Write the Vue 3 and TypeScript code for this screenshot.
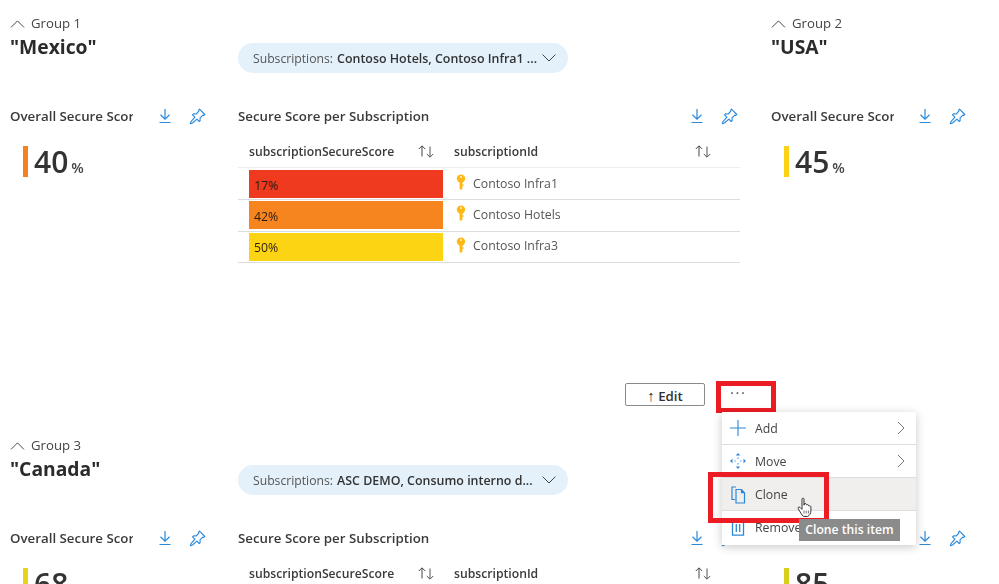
<script setup lang="ts">
interface Sub { pct: string; name: string; color: string }
interface Section {
  group: string; title: string; score: number; barColor: string;
  pillLabel: string; right: { group: string; title: string; score: number; barColor: string };
  subs: Sub[];
}
const sections: Section[] = [
  {
    group: 'Group 1', title: '"Mexico"', score: 40, barColor: '#f5821f',
    pillLabel: 'Contoso Hotels, Contoso Infra1 ...',
    right: { group: 'Group 2', title: '"USA"', score: 45, barColor: '#fcd116' },
    subs: [
      { pct: '17%', name: 'Contoso Infra1', color: '#ef3a20' },
      { pct: '42%', name: 'Contoso Hotels', color: '#f6851f' },
      { pct: '50%', name: 'Contoso Infra3', color: '#fdd413' },
    ],
  },
  {
    group: 'Group 3', title: '"Canada"', score: 68, barColor: '#e6d31c',
    pillLabel: 'ASC DEMO, Consumo interno d...',
    right: { group: '', title: '', score: 85, barColor: '#d6d01c' },
    subs: [],
  },
];
</script>

<template>
  <div class="page">
    <svg width="0" height="0" class="defs">
      <symbol id="dl" viewBox="0 0 14 16"><path d="M7 1v10M2.500 6.800 7 11.200l4.500-4.400M1.500 14.500h11" fill="none" stroke="#2b88d8" stroke-width="1.200" /></symbol>
      <symbol id="pin" viewBox="0 0 17 17"><path d="M10.500 1.200 15.800 6.500l-1 .9-1-.3-2.800 2.800.2 2.600-1 1-2.300-2.400L3.500 15 1.300 15.800l.7-2.200 3.900-4.400-2.400-2.400 1-1 2.600.2 2.800-2.800-.2-1z" fill="none" stroke="#2b88d8" stroke-width="1.100" stroke-linejoin="round" /></symbol>
      <symbol id="sort" viewBox="0 0 18 14"><path d="M5 12.500V2M1.800 5 5 1.800 8.200 5" fill="none" stroke="#444" stroke-width="1" /><path d="M13 2.500V13M9.800 10 13 13.200 16.200 10" fill="none" stroke="#555" stroke-width="1" /></symbol>
      <symbol id="key" viewBox="0 0 10 16"><circle cx="5" cy="4.600" r="4.200" fill="#fdb813" /><rect x="3.600" y="7" width="2.800" height="8.400" rx=".6" fill="#fdb813" /><rect x="6" y="10.400" width="1.600" height="1.400" fill="#fdb813" /><circle cx="5" cy="2.900" r="1" fill="#fff6d8" /></symbol>
      <symbol id="caret-up" viewBox="0 0 16 9"><path d="M.7 8.300 8 1l7.300 7.300" fill="none" stroke="#444" stroke-width="1.100" /></symbol>
      <symbol id="chev" viewBox="0 0 8 14"><path d="M1 1l6 6-6 6" fill="none" stroke="#777" stroke-width="1" /></symbol>
    </svg>

    <section v-for="(s, i) in sections" :key="s.group" class="row">
      <div class="col">
        <div class="head">
          <div class="group"><svg class="caret"><use href="#caret-up" /></svg>{{ s.group }}</div>
          <div class="title">{{ s.title }}</div>
        </div>
        <div class="widget-head narrow">
          <span class="widget-title clip">Overall Secure Score</span>
          <svg class="ic-dl"><use href="#dl" /></svg>
          <svg class="ic-pin"><use href="#pin" /></svg>
        </div>
        <div class="score">
          <span class="bar" :style="{ background: s.barColor }"></span>
          <span class="num">{{ s.score }}</span><span class="unit">%</span>
        </div>
      </div>

      <div class="col">
        <div class="head">
          <div class="pill">
            <span class="pill-label">Subscriptions:</span>
            <b class="pill-value">{{ s.pillLabel }}</b>
            <svg class="pill-chev" viewBox="0 0 14 8"><path d="M.6.6 7 7l6.400-6.400" fill="none" stroke="#444" stroke-width="1" /></svg>
          </div>
        </div>
        <div class="widget-head wide">
          <span class="widget-title">Secure Score per Subscription</span>
          <svg class="ic-dl"><use href="#dl" /></svg>
          <svg class="ic-pin"><use href="#pin" /></svg>
        </div>
        <div class="table">
          <div class="thead">
            <span class="th th-score">subscriptionSecureScore<svg class="sort"><use href="#sort" /></svg></span>
            <span class="th th-id">subscriptionId<svg class="sort"><use href="#sort" /></svg></span>
          </div>
          <div v-for="r in s.subs" :key="r.name" class="tr">
            <span class="cell-score" :style="{ background: r.color }">{{ r.pct }}</span>
            <svg class="key"><use href="#key" /></svg>
            <span class="cell-name">{{ r.name }}</span>
          </div>
        </div>
      </div>

      <div class="col">
        <div class="head">
          <template v-if="s.right.group">
            <div class="group"><svg class="caret"><use href="#caret-up" /></svg>{{ s.right.group }}</div>
            <div class="title">{{ s.right.title }}</div>
          </template>
        </div>
        <div class="widget-head narrow last-col">
          <span class="widget-title clip">Overall Secure Score</span>
          <svg class="ic-dl"><use href="#dl" /></svg>
          <svg class="ic-pin"><use href="#pin" /></svg>
        </div>
        <div class="score">
          <span class="bar" :style="{ background: s.right.barColor }"></span>
          <span class="num">{{ s.right.score }}</span><span class="unit">%</span>
        </div>
      </div>

      <div v-if="i === 0" class="toolbar">
        <button class="edit"><span class="arrow">↑</span> Edit</button>
        <div class="more">
          <span class="dots">···</span>
          <div class="menu">
            <div class="item">
              <svg class="mi" viewBox="0 0 16 16"><path d="M8 0v16M0 8h16" stroke="#2b88d8" stroke-width="1.100" /></svg>
              <span>Add</span><svg class="chev"><use href="#chev" /></svg>
            </div>
            <div class="item">
              <svg class="mi" viewBox="0 0 16 16"><path d="M8 0 5.800 2.500h4.400zM8 16l-2.200-2.500h4.400zM0 8l2.500-2.200v4.400zM16 8l-2.500-2.200v4.400z" fill="#2b88d8" /><path d="M8 4.500v1.200M8 10.300v1.200M4.500 8h1.200M10.300 8h1.200" stroke="#2b88d8" stroke-width="1.200" /></svg>
              <span>Move</span><svg class="chev"><use href="#chev" /></svg>
            </div>
            <div class="item hover">
              <svg class="mi" viewBox="0 0 16 18"><path d="M6 1H2v12.500h3M6 3.500h5.500l3 3.200V17H6zM11.500 3.500v3.200h3" fill="none" stroke="#2b88d8" stroke-width="1.200" /></svg>
              <span>Clone</span>
            </div>
            <div class="item last">
              <svg class="mi" viewBox="0 0 16 16"><path d="M2.500 .8h11v14.400h-11zM6.300 4v8M9.700 4v8" fill="none" stroke="#2b88d8" stroke-width="1.300" /></svg>
              <span>Remove</span>
            </div>
            <div class="clone-mark"></div>
            <svg class="hand" viewBox="0 0 16 21">
              <path d="M5 2.200c0-1.400 2-1.400 2 0v6l.4-1.600c1.600-.6 1.900.3 1.900 1l.3.2c1.400-.6 2 .2 2 1l.3.1c1.300-.4 2 .3 2 1.300v3.600c0 2.600-1.400 4.700-3.200 5.600H6.400C4.800 18 3 14.800 1.300 11.800.6 10.400 2 9.400 3 10.400l2 2z" fill="#fff" stroke="#333" stroke-width="1" />
              <path d="M7 13.500v3M9.200 13.500v3M11.400 13.500v3" stroke="#555" stroke-width=".8" />
            </svg>
            <div class="tooltip">Clone this item</div>
          </div>
        </div>
      </div>
    </section>
  </div>
</template>

<style>
html, body { margin: 0; background: #fff; overflow: hidden; }
</style>

<style scoped>
.page {
  width: 999px;
  height: 584px;
  overflow: hidden;
  font-family: "Open Sans", "Noto Sans", sans-serif;
  color: #333;
  filter: blur(0.5px);
}
.defs { position: absolute; }
.row {
  display: grid;
  grid-template-columns: 228px 533px 228px;
  grid-template-rows: 422px;
  height: 422px;
  padding-left: 10px;
  position: relative;
}
.col { min-width: 0; }
.head { height: 105px; padding-top: 15px; box-sizing: border-box; }
.group {
  display: flex;
  align-items: center;
  font-size: 13.200px;
  line-height: 17px;
  color: #444;
}
.caret { width: 15px; height: 8px; margin-right: 6px; }
.title {
  font-size: 19.300px;
  font-weight: 700;
  line-height: 24px;
  margin-top: 3px;
  color: #2b2b2b;
}
.pill {
  width: 330px;
  height: 30px;
  margin-top: 28px;
  border-radius: 15px;
  background: #e4f1fb;
  display: flex;
  align-items: center;
  padding-left: 15px;
  box-sizing: border-box;
  font-size: 12.200px;
  white-space: nowrap;
}
.pill-label { color: #555; margin-right: 4px; }
.pill-value { font-weight: 600; font-size: 12.450px; color: #333; }
.pill-chev { width: 14px; height: 8px; margin-left: auto; margin-right: 12px; }
.widget-head {
  height: 22px;
  display: flex;
  align-items: center;
  position: relative;
}
.narrow { width: 196px; }
.last-col { width: 195px; }
.wide { width: 500px; }
.widget-title {
  font-size: 13.300px;
  font-weight: 600;
  color: #3a3a3a;
  white-space: nowrap;
}
.clip { width: 123px; overflow: hidden; }
.ic-dl { width: 14px; height: 16px; margin-left: auto; margin-right: 17px; }
.ic-pin { width: 17px; height: 17px; }
.score {
  display: flex;
  align-items: center;
  height: 31px;
  margin-top: 19px;
  padding-left: 13px;
}
.bar { width: 5px; height: 31px; margin-right: 6px; }
.num { font-size: 30px; font-weight: 600; line-height: 35px; color: #333; }
.unit { font-size: 14.500px; font-weight: 600; margin: 11px 0 0 3px; color: #444; }
.table { width: 502px; margin-top: 8px; }
.thead {
  height: 32px;
  margin-bottom: 1px;
  display: flex;
  align-items: center;
  border-bottom: 1px solid #eee;
  font-size: 12.200px;
  font-weight: 600;
  color: #3a3a3a;
}
.th { display: flex; align-items: center; }
.th-score { width: 205px; margin-left: 11px; }
.th-id { width: 258px; }
.sort { width: 18px; height: 14px; margin-left: auto; }
.th-score .sort { margin-right: 19px; }
.tr {
  height: 30.300px;
  display: flex;
  align-items: center;
  border-bottom: 1px solid #ddd;
  font-size: 12.300px;
}
.cell-score {
  width: 194px;
  height: 28px;
  margin-left: 11px;
  padding: 2px 0 0 5px;
  box-sizing: border-box;
  display: flex;
  align-items: center;
  color: #2a1c10;
  font-size: 12.300px;
}
.key { width: 10px; height: 16px; margin: -4px 7px 0 13px; }
.cell-name { color: #555; margin-top: -2px; }
.toolbar {
  position: absolute;
  left: 625px;
  top: 381px;
  display: flex;
  align-items: flex-start;
  gap: 11px;
  z-index: 2;
}
.edit {
  width: 80px;
  height: 23px;
  margin-top: 2px;
  padding: 0;
  background: #fff;
  border: 1px solid #8a8a8a;
  border-radius: 2px;
  font: 600 13.300px "Open Sans", sans-serif;
  color: #333;
}
.arrow { font-weight: 400; font-size: 15px; }
.more {
  width: 60px;
  height: 32px;
  box-sizing: border-box;
  border: 5px solid #ec1c24;
  position: relative;
  padding-left: 9px;
}
.dots {
  display: block;
  font-size: 15px;
  line-height: 12px;
  letter-spacing: 1.500px;
  color: #555;
}
.menu {
  position: absolute;
  left: 1px;
  top: 26px;
  width: 194px;
  height: 133px;
  background: #fff;
  box-shadow: 0 2px 9px rgba(0, 0, 0, 0.22);
}
.item {
  height: 32px;
  border-bottom: 1px solid #ddd;
  display: flex;
  align-items: center;
  padding-left: 8px;
  font-size: 12.300px;
  color: #444;
}
.item.hover { background: #f0efed; padding-top: 1px; height: 31px; }
.item.last { border-bottom: 0; height: 33px; }
.mi { width: 16px; height: 18px; margin-right: 9px; flex: none; }
.chev { width: 8px; height: 14px; margin-left: auto; margin-right: 11px; }
.clone-mark {
  position: absolute;
  left: -14px;
  top: 60px;
  width: 121px;
  height: 51px;
  box-sizing: border-box;
  border: 5px solid #ec1c24;
}
.hand {
  position: absolute;
  left: 75px;
  top: 85px;
  width: 16px;
  height: 21px;
}
.tooltip {
  position: absolute;
  left: 77px;
  top: 107px;
  width: 101px;
  height: 22px;
  background: #8b8b8b;
  color: #fff;
  font-size: 12.200px;
  font-weight: 600;
  line-height: 22px;
  text-align: center;
  white-space: nowrap;
}
</style>
